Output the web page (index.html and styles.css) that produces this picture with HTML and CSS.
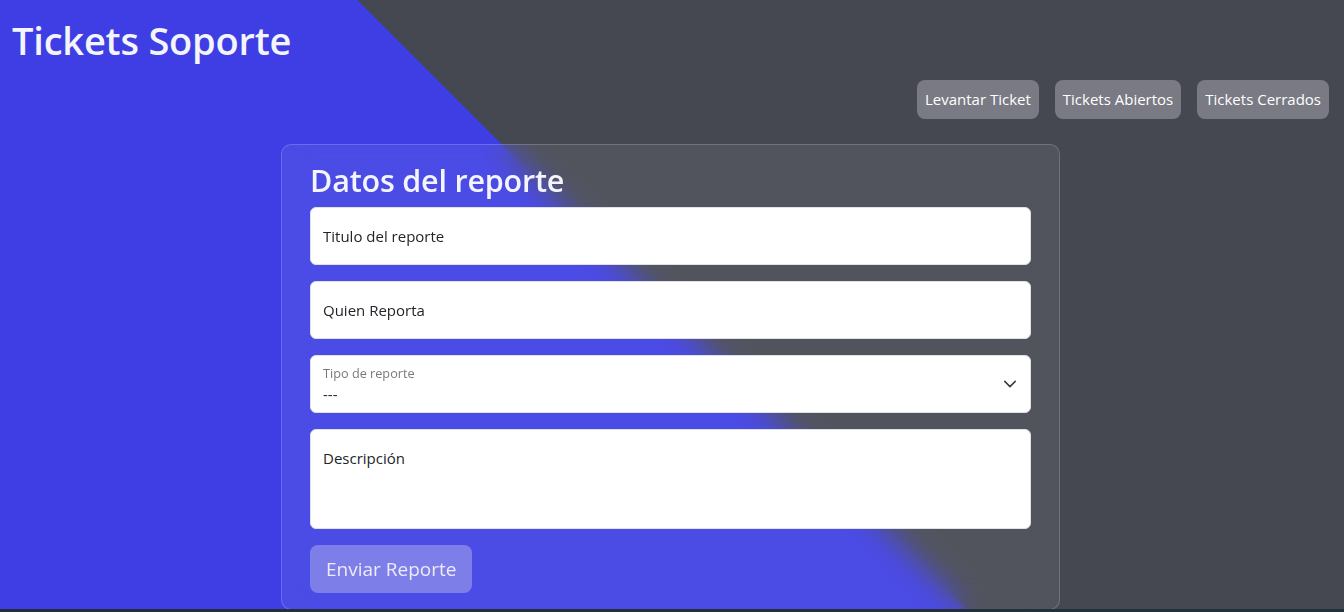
FILE: index.html
```html
<!DOCTYPE html>
<html lang="es">
<head>
<meta charset="utf-8">
<title>Tickets Soporte</title>
<link rel="stylesheet" href="styles.css">
</head>
<body>
<div class="page">
  <header class="top">
    <h1 class="brand">Tickets Soporte</h1>
  </header>
  <nav class="nav">
    <a class="nav-btn" href="#">Levantar Ticket</a>
    <a class="nav-btn" href="#">Tickets Abiertos</a>
    <a class="nav-btn" href="#">Tickets Cerrados</a>
  </nav>
  <main class="wrap">
    <section class="card">
      <h2 class="card-title">Datos del reporte</h2>
      <form class="form">
        <div class="field"><span class="ph">Titulo del reporte</span></div>
        <div class="field"><span class="ph">Quien Reporta</span></div>
        <div class="field select">
          <span class="mini">Tipo de reporte</span>
          <span class="val">---</span>
          <svg class="chev" width="14" height="14" viewBox="0 0 16 16"><path d="m2 5 6 6 6-6" fill="none" stroke="#343a40" stroke-width="1.7" stroke-linecap="round" stroke-linejoin="round"/></svg>
        </div>
        <div class="field area"><span class="ph">Descripción</span></div>
        <button type="button" class="submit">Enviar Reporte</button>
      </form>
    </section>
  </main>
</div>
</body>
</html>
```

FILE: styles.css
```css
* { box-sizing: border-box; }
html, body { margin: 0; padding: 0; }
body {
  background: #243039;
  font-family: "Open Sans", "Noto Sans", sans-serif;
  color: #212529;
}
.page {
  height: 609px;
  overflow: hidden;
  background: linear-gradient(45deg, #3e3ee4 49.5%, #454751 49.5%);
}
.top { padding: 16px 0 0 12px; }
.brand {
  margin: 0;
  font-size: 38px;
  line-height: 48px;
  font-weight: 600;
  color: #f4f4fb;
  letter-spacing: -0.2px;
}
.nav {
  display: flex;
  justify-content: flex-end;
  gap: 16px;
  padding: 16px 15px 0 0;
}
.nav-btn {
  display: block;
  padding: 8px 8px;
  font-size: 15px;
  line-height: 23px;
  color: #ffffff;
  text-decoration: none;
  background: #797a83;
  border-radius: 8px;
}
.wrap {
  display: flex;
  padding: 25px 0 0 281px;
}
.card {
  width: 779px;
  padding: 16px 28px 16px 28px;
  border: 1px solid rgba(255,255,255,0.18);
  border-radius: 10px;
  background: rgba(255,255,255,0.07);
  backdrop-filter: blur(14px);
  -webkit-backdrop-filter: blur(14px);
}
.card-title {
  margin: 0 0 8px;
  font-size: 30.5px;
  line-height: 38px;
  font-weight: 600;
  color: #f4f4fb;
  letter-spacing: -0.2px;
}
.form { display: flex; flex-direction: column; gap: 16px; }
.field {
  position: relative;
  height: 58px;
  background: #fff;
  border: 1px solid #dee2e6;
  border-radius: 6px;
  padding: 16px 12px;
  font-size: 15px;
  line-height: 24px;
  color: #212529;
}
.ph { display: block; }
.select { padding: 6px 12px 0; }
.mini {
  display: block;
  font-size: 12.7px;
  line-height: 22px;
  color: rgba(33,37,41,0.62);
}
.val { display: block; line-height: 20px; font-size: 15px; }
.chev { position: absolute; right: 13px; top: 21px; }
.area { height: 100px; }
.submit {
  align-self: flex-start;
  margin-top: 0;
  height: 48px;
  padding: 0 16px;
  font-family: inherit;
  font-size: 19px;
  color: #ecebfa;
  background: #7e7ee9;
  border: 0;
  border-radius: 8px;
}
```
